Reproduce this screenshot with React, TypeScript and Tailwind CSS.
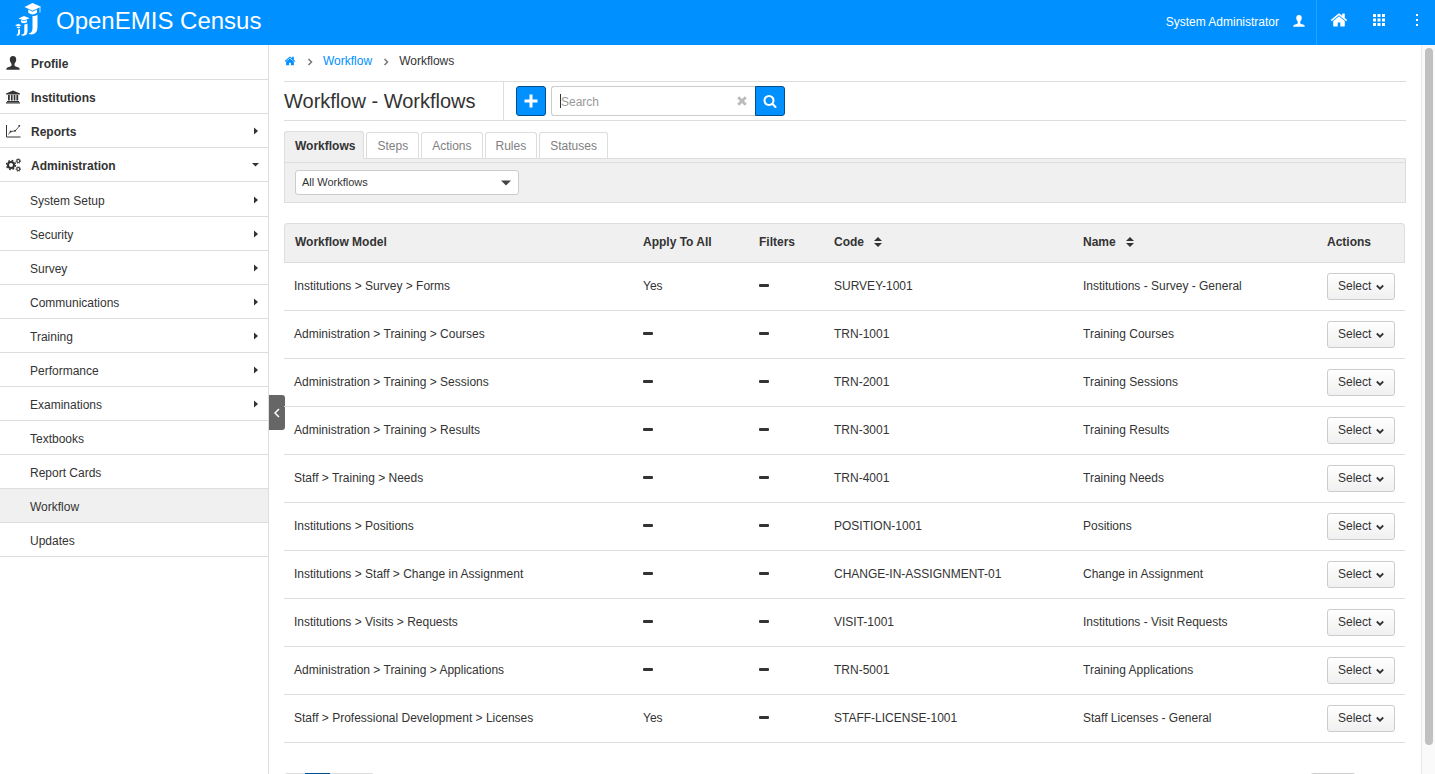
import React from "react";

const MENU = [
  { label: "Profile", icon: "user" },
  { label: "Institutions", icon: "bank" },
  { label: "Reports", icon: "chart", caret: "right" },
  { label: "Administration", icon: "cogs", caret: "down" },
];

const SUBMENU = [
  { label: "System Setup", caret: true },
  { label: "Security", caret: true },
  { label: "Survey", caret: true },
  { label: "Communications", caret: true },
  { label: "Training", caret: true },
  { label: "Performance", caret: true },
  { label: "Examinations", caret: true },
  { label: "Textbooks" },
  { label: "Report Cards" },
  { label: "Workflow", active: true },
  { label: "Updates" },
];

const TABS = ["Workflows", "Steps", "Actions", "Rules", "Statuses"];

const ROWS = [
  { model: "Institutions > Survey > Forms", all: true, code: "SURVEY-1001", name: "Institutions - Survey - General" },
  { model: "Administration > Training > Courses", code: "TRN-1001", name: "Training Courses" },
  { model: "Administration > Training > Sessions", code: "TRN-2001", name: "Training Sessions" },
  { model: "Administration > Training > Results", code: "TRN-3001", name: "Training Results" },
  { model: "Staff > Training > Needs", code: "TRN-4001", name: "Training Needs" },
  { model: "Institutions > Positions", code: "POSITION-1001", name: "Positions" },
  { model: "Institutions > Staff > Change in Assignment", code: "CHANGE-IN-ASSIGNMENT-01", name: "Change in Assignment" },
  { model: "Institutions > Visits > Requests", code: "VISIT-1001", name: "Institutions - Visit Requests" },
  { model: "Administration > Training > Applications", code: "TRN-5001", name: "Training Applications" },
  { model: "Staff > Professional Development > Licenses", all: true, code: "STAFF-LICENSE-1001", name: "Staff Licenses - General" },
];

function Logo() {
  return (
    <svg className="w-[26px] h-[34px] mb-1" viewBox="0 0 26 34" fill="currentColor" aria-hidden="true">
      {/* tall graduate */}
      <path d="M17.500 1 26 4.800 17.500 8.800 9.500 5z" />
      <path d="M13.300 7.500v3.300q4.300 3.400 8.700 0V7.500l-4.500 2.200z" />
      <path d="M25 5v5.500" stroke="currentColor" strokeWidth="0.8" />
      <path d="M17.500 14q3 .3 5-1.300V25q0 7-5.500 7.500-2.500 0-3.500-1.200 4 0 4-5z" />
      {/* middle graduate */}
      <path d="M9 14 14.500 16.300 9 18.500 3.500 16.500z" />
      <path d="M6 18v2.300q3 2 6 0V18l-3 1.300z" />
      <path d="M9.300 22.500q1.700 0 3.200-1V29q0 4.500-4 4.700-2 0-2.700-1 3.500 0 3.500-3.200z" />
      {/* small graduate */}
      <path d="M3.300 21.800 6.500 23.200 3.300 24.600 0 23.200z" />
      <path d="M1.800 24.500v1.300q1.500 1 3.200 0v-1.300l-1.700.8z" />
      <path d="M3 27.500q1.200 0 2-.5v4q0 2.500-2.300 2.700-1 0-1.500-.6Q3 33 3 31z" />
    </svg>
  );
}

function HomeIcon({ className }: { className: string }) {
  return (
    <svg className={className} viewBox="0 0 1792 1792" fill="currentColor" aria-hidden="true">
      <path d="M1472 992v480q0 26-19 45t-45 19h-384v-384h-256v384h-384q-26 0-45-19t-19-45v-480q0-1 .5-3t.5-3l575-474 575 474q1 2 1 6zm223-69l-62 74q-8 9-21 11h-3q-13 0-21-7l-692-577-692 577q-12 8-24 7-13-2-21-11l-62-74q-8-10-7-23.5t11-21.5l719-599q32-26 76-26t76 26l244 204v-195q0-14 9-23t23-9h192q14 0 23 9t9 23v408l219 182q10 8 11 21.5t-7 23.5z" />
    </svg>
  );
}

function UserIcon({ className }: { className: string }) {
  return (
    <svg className={className} viewBox="0 0 14 14" fill="currentColor" aria-hidden="true">
      <path d="M7 0C4.800 0 3.800 1.400 3.800 3.300c0 2 .7 3.400 1.700 4.400v1.500c0 .6-.5 1-1.200 1.300L1.500 11.400C.7 11.700.3 12.300.3 13.800h13.400c0-1.500-.4-2.100-1.200-2.400l-2.800-.9c-.7-.3-1.200-.7-1.200-1.300V7.700c1-1 1.700-2.400 1.700-4.400C10.200 1.400 9.200 0 7 0z" />
    </svg>
  );
}

function MenuIcon({ name }: { name: string }) {
  if (name === "user") return <UserIcon className="w-[14px] h-[14px]" />;
  if (name === "bank") {
    return (
      <svg className="w-[14px] h-[14px]" viewBox="0 0 14 14" fill="currentColor" aria-hidden="true">
        <path d="M7 .5 14 3.500v1H0v-1zM2 5h1.800v5.500H2zm2.900 0h1.700v5.500H4.900zm2.800 0h1.700v5.500H7.700zm2.700 0h1.800v5.500h-1.800zM1 11h12v1H1zM0 12.300h14v1.200H0z" />
      </svg>
    );
  }
  if (name === "chart") {
    return (
      <svg className="w-[15px] h-[14px]" viewBox="0 0 15 14" fill="none" stroke="currentColor" aria-hidden="true">
        <path d="M.5 1v12H14.500" />
        <path d="M2.500 10.500 4.500 7.500l4.500-.5 4.500-5" strokeWidth="0.8" />
        <path d="M3.800 6.800h1.600v1.600H3.800zM8.300 6h1.600v1.600H8.300zM12.500 1h1.600v1.600h-1.600z" fill="currentColor" stroke="none" />
      </svg>
    );
  }
  return (
    <svg className="w-[15px] h-[14px]" viewBox="0 0 15 14" fill="none" stroke="currentColor" aria-hidden="true">
      <circle cx="5" cy="7" r="3" strokeWidth="2" />
      <circle cx="5" cy="7" r="4.500" strokeWidth="1.400" strokeDasharray="1.770 1.770" />
      <circle cx="12.300" cy="3" r="1.500" strokeWidth="1.200" />
      <circle cx="12.300" cy="3" r="2.300" strokeWidth="0.900" strokeDasharray="0.900 0.900" />
      <circle cx="12.300" cy="11" r="1.500" strokeWidth="1.200" />
      <circle cx="12.300" cy="11" r="2.300" strokeWidth="0.900" strokeDasharray="0.900 0.900" />
    </svg>
  );
}

function Caret({ down }: { down?: boolean }) {
  return (
    <svg className="ml-auto w-2 h-2" viewBox="0 0 8 8" fill="currentColor" aria-hidden="true">
      {down ? <path d="M0 2h7L3.500 5.500z" /> : <path d="M2 0.500v7L6 4z" />}
    </svg>
  );
}

function Angle() {
  return (
    <svg className="w-2 h-2 mt-[2px] ml-[10px] mr-[9px] text-[#777]" viewBox="0 0 8 8" fill="none" stroke="currentColor" strokeWidth="1.500" aria-hidden="true">
      <path d="M2.500 1l3 3-3 3" />
    </svg>
  );
}

function SortIcon() {
  return (
    <svg className="w-2 h-[10px]" viewBox="0 0 8 10" fill="currentColor" aria-hidden="true">
      <path d="M4 0 8 4H0zM0 6h8L4 10z" />
    </svg>
  );
}

function Dash() {
  return <span className="block w-[10px] h-[3px] mb-px rounded-[1px] bg-[#333]" />;
}

function Header() {
  return (
    <header className="flex items-center h-[45px] shrink-0 bg-[#0090ff] text-white">
      <a href="#home" className="flex items-center gap-[15px] pl-[15px] pb-1">
        <Logo />
        <span className="text-2xl">OpenEMIS Census</span>
      </a>
      <div className="flex items-center ml-auto h-full">
        <a href="#account" className="flex items-center gap-[14px] h-full pr-[11px] pb-1 text-xs border-r border-[#1fa6ff]">
          <span className="pt-[2px]">System Administrator</span>
          <UserIcon className="w-3 h-3" />
        </a>
        <button aria-label="Home" className="ml-[13px] pb-[6px]">
          <HomeIcon className="w-[18px] h-[18px]" />
        </button>
        <button aria-label="Applications" className="ml-[25px] pb-[5px]">
          <svg className="w-3 h-3" viewBox="0 0 12 12" fill="currentColor">
            <path d="M0 0h3v3H0zM4.500 0h3v3h-3zM9 0h3v3H9zM0 4.500h3v3H0zM4.500 4.500h3v3h-3zM9 4.500h3v3H9zM0 9h3v3H0zM4.500 9h3v3h-3zM9 9h3v3H9z" />
          </svg>
        </button>
        <button aria-label="More" className="ml-[31px] mr-[17px] pb-[5px]">
          <svg className="w-[2px] h-3" viewBox="0 0 2 12" fill="currentColor">
            <path d="M0 0h2v2H0zM0 5h2v2H0zM0 10h2v2H0z" />
          </svg>
        </button>
      </div>
    </header>
  );
}

function Sidebar() {
  return (
    <nav className="relative w-[269px] shrink-0 border-r border-[#ddd] pt-px">
      <ul>
        {MENU.map((item) => (
          <li key={item.label}>
            <a href="#menu" className="flex items-center h-[34px] pl-[6px] pr-2 border-b border-[#ddd] font-bold">
              <span className="w-[25px]">
                <MenuIcon name={item.icon} />
              </span>
              <span className="pt-[2px]">{item.label}</span>
              {item.caret && <Caret down={item.caret === "down"} />}
            </a>
          </li>
        ))}
      </ul>
      <ul className="pt-px">
        {SUBMENU.map((item) => (
          <li key={item.label} className={item.active ? "bg-[#f0f0f0]" : ""}>
            <a href="#submenu" className="flex items-center h-[34px] pl-[30px] pr-2 border-b border-[#ddd]">
              <span className="pt-[2px]">{item.label}</span>
              {item.caret && <Caret />}
            </a>
          </li>
        ))}
      </ul>
      <button
        aria-label="Collapse menu"
        className="absolute left-full top-[350px] ml-px flex items-center justify-center w-4 h-[35px] rounded-r-[3px] bg-[#666] text-white"
      >
        <svg className="w-2 h-[10px]" viewBox="0 0 8 10" fill="none" stroke="currentColor" strokeWidth="1.500">
          <path d="M6 1 2 5l4 4" />
        </svg>
      </button>
    </nav>
  );
}

function Toolbar() {
  return (
    <div className="flex items-center h-10 border-y border-[#ddd]">
      <h1 className="flex items-center self-stretch w-[220px] border-r border-[#ddd] text-xl whitespace-nowrap">
        Workflow - Workflows
      </h1>
      <button aria-label="Add" className="flex items-center justify-center ml-3 w-[30px] h-[30px] rounded-[3px] border border-[#004f8c] bg-[#0090ff] text-white">
        <svg className="w-[14px] h-[14px]" viewBox="0 0 14 14" fill="currentColor">
          <path d="M5.500.5h3v5h5v3h-5v5h-3v-5h-5v-3h5z" />
        </svg>
      </button>
      <div className="flex ml-[5px]">
        <label className="flex items-center w-[204px] h-[30px] px-2 rounded-l-[3px] border border-r-0 border-[#ccc]">
          <span className="w-px h-[14px] bg-[#333]" />
          <input
            type="text"
            placeholder="Search"
            aria-label="Search"
            className="flex-1 min-w-0 pt-[2px] outline-none placeholder:text-[#999]"
          />
          <svg className="w-[10px] h-[10px] text-[#bbb]" viewBox="0 0 10 10" fill="none" stroke="currentColor" strokeWidth="2.800" aria-hidden="true">
            <path d="M1.200 1.200l7.600 7.600M8.800 1.200L1.200 8.800" />
          </svg>
        </label>
        <button aria-label="Run search" className="flex items-center justify-center w-[30px] h-[30px] rounded-r-[3px] border border-[#004f8c] bg-[#0090ff] text-white">
          <svg className="w-[14px] h-[14px]" viewBox="0 0 1792 1792" fill="currentColor">
            <path d="M1216 832q0-185-131.500-316.500t-316.500-131.500-316.500 131.500-131.500 316.500 131.500 316.500 316.500 131.500 316.500-131.500 131.500-316.500zm512 832q0 52-38 90t-90 38q-54 0-90-38l-343-342q-179 124-399 124-143 0-273.500-55.500t-225-150-150-225-55.500-273.500 55.500-273.500 150-225 225-150 273.500-55.500 273.500 55.500 225 150 150 225 55.500 273.500q0 220-124 399l343 343q37 37 37 90z" />
          </svg>
        </button>
      </div>
    </div>
  );
}

function Tabs() {
  return (
    <div className="mt-[10px]">
      <div className="flex items-end gap-[2px]">
        {TABS.map((tab, i) => (
          <button
            key={tab}
            className={
              i === 0
                ? "relative -mb-px h-7 pl-[10px] pr-2 rounded-t-[3px] border border-b-0 border-[#ddd] bg-[#f0f0f0] font-bold"
                : "h-[26px] px-[10px] rounded-t-[3px] border border-b-0 border-[#ddd] text-[#808080]"
            }
          >
            {tab}
          </button>
        ))}
      </div>
      <div className="border border-[#ddd] bg-[#f0f0f0]">
        <div className="flex items-center h-10 mt-[3px] px-[10px] border-t border-[#ddd]">
          <div className="relative w-[224px]">
            <select
              aria-label="Workflow filter"
              className="appearance-none block w-full h-[25px] pl-[6px] pr-6 rounded-[3px] border border-[#ccc] bg-white text-[11px]"
            >
              <option>All Workflows</option>
            </select>
            <svg className="absolute right-2 top-[10px] w-[10px] h-[6px] pointer-events-none" viewBox="0 0 10 6" fill="#444" aria-hidden="true">
              <path d="M0 .5h10L5 5.500z" />
            </svg>
          </div>
        </div>
      </div>
    </div>
  );
}

function WorkflowTable() {
  return (
    <div className="mt-5 mr-px">
      <div className="rounded-t-[4px] border border-b-0 border-[#ddd] bg-[#f0f0f0] -mb-[39px] h-[39px]" />
      <table className="relative w-full table-fixed text-left">
        <thead>
          <tr className="h-[39px] border-b border-[#ddd]">
            <th className="pl-[11px]">Workflow Model</th>
            <th className="w-[116px] pl-[10px]">Apply To All</th>
            <th className="w-[75px] pl-[10px]">Filters</th>
            <th className="w-[249px] pl-[10px]">
              <span className="flex items-center gap-[10px]">Code <SortIcon /></span>
            </th>
            <th className="w-[244px] pl-[10px]">
              <span className="flex items-center gap-[10px]">Name <SortIcon /></span>
            </th>
            <th className="w-[88px] pl-[10px]">Actions</th>
          </tr>
        </thead>
        <tbody>
          {ROWS.map((row) => (
            <tr key={row.model} className="h-12 border-b border-[#ddd]">
              <td className="pl-[10px]">{row.model}</td>
              <td className="pl-[10px]">{row.all ? "Yes" : <Dash />}</td>
              <td className="pl-[10px]"><Dash /></td>
              <td className="pl-[10px]">{row.code}</td>
              <td className="pl-[10px]">{row.name}</td>
              <td className="pl-[10px]">
                <button className="flex items-center gap-[5px] w-[68px] h-[27px] pl-[10px] rounded-[3px] border border-[#ccc] bg-linear-to-b from-white to-[#f0f0f0]">
                  Select
                  <svg className="w-2 h-2 mt-[2px]" viewBox="0 0 8 8" fill="none" stroke="currentColor" strokeWidth="1.800" aria-hidden="true">
                    <path d="M.8 2.500 4 5.700l3.200-3.200" />
                  </svg>
                </button>
              </td>
            </tr>
          ))}
        </tbody>
      </table>
    </div>
  );
}

function Pagination() {
  return (
    <div className="flex justify-between mt-[30px] pr-[50px]">
      <div className="flex">
        <button aria-label="Previous page" className="w-[21px] h-[30px] rounded-l-[3px] border border-[#ddd]" />
        <button aria-label="First page" className="w-[25px] h-[30px] border border-[#004f8c] bg-[#0090ff]" />
        <button aria-label="Second page" className="w-[22px] h-[30px] border border-[#ddd]" />
        <button aria-label="Next page" className="w-[22px] h-[30px] rounded-r-[3px] border border-l-0 border-[#ddd]" />
      </div>
      <button aria-label="Rows per page" className="w-[46px] h-[30px] rounded-[3px] border border-[#ccc]" />
    </div>
  );
}

export default function App() {
  return (
    <div className="flex flex-col h-screen overflow-hidden bg-white font-['Liberation_Sans',Arial,sans-serif] text-xs text-[#333]">
      <Header />
      <div className="flex flex-1 min-h-0">
        <Sidebar />
        <main className="flex-1 min-w-0 overflow-hidden px-[15px]">
          <div className="flex items-center h-9 pb-1">
            <a href="#home" aria-label="Home" className="text-[#0090ff]">
              <HomeIcon className="w-3 h-3" />
            </a>
            <Angle />
            <a href="#workflow" className="text-[#0090ff]">Workflow</a>
            <Angle />
            <span>Workflows</span>
          </div>
          <Toolbar />
          <Tabs />
          <WorkflowTable />
          <Pagination />
        </main>
        <div className="w-[14px] shrink-0 border-l border-[#e8e8e8] bg-[#fafafa] px-[3px] pt-[3px]">
          <div className="h-[96%] w-2 rounded-full bg-[#c1c1c1]" />
        </div>
      </div>
    </div>
  );
}
